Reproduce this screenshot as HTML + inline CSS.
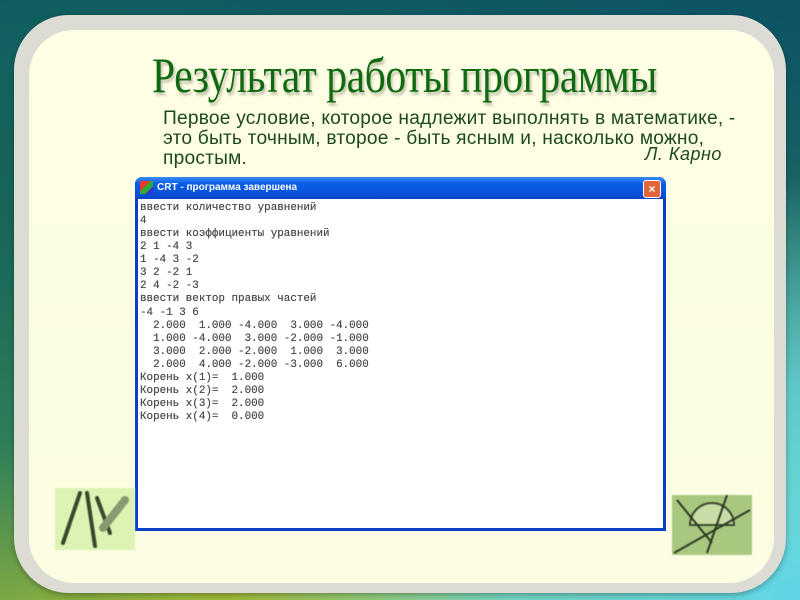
<!DOCTYPE html>
<html><head><meta charset="utf-8"><style>
html,body{margin:0;padding:0}
body{width:800px;height:600px;position:relative;overflow:hidden;
background:linear-gradient(160deg,#0f5a45 0%,#1a6a5a 30%,#2f7f5a 50%,#9cb83a 75%,#d8d430 100%);}
.bgr{position:absolute;inset:0;background:linear-gradient(200deg,rgba(10,80,100,0.9) 0%,rgba(20,100,110,0.6) 40%,rgba(80,200,220,0) 60%);}
.bgr2{position:absolute;inset:0;background:radial-gradient(ellipse at 100% 100%,#5fd6e6 0%,rgba(95,214,230,0.8) 25%,rgba(95,214,230,0) 50%);}
.frame{position:absolute;left:14px;top:15px;width:772px;height:578px;border-radius:55px;background:#dcdcd4;box-shadow:0 2px 6px rgba(0,0,0,.3);}
.panel{position:absolute;left:29px;top:30px;width:745px;height:553px;border-radius:45px;
background:linear-gradient(180deg,#ffffe6 0%,#fbfde0 60%,#fcfde2 100%);}
.title{position:absolute;left:152px;top:50px;font-family:"Liberation Serif",serif;font-size:50px;color:#0f6a10;
transform:scaleX(0.83);transform-origin:left center;white-space:nowrap;line-height:50px;text-shadow:2px 3px 3px rgba(0,0,0,.25);letter-spacing:-0.5px}
.quote{position:absolute;left:163px;top:109px;font-family:"Liberation Sans",sans-serif;font-size:19px;line-height:20px;color:#1c4a1c;white-space:nowrap;letter-spacing:0.2px;transform:scaleX(1.01);transform-origin:left top}
.author{position:absolute;left:645px;top:144px;font-family:"Liberation Sans",sans-serif;font-style:italic;font-size:18px;color:#1c4a1c;letter-spacing:0.5px}
.win{position:absolute;left:135px;top:177px;width:531px;height:354px;background:#0a3fc8;border-radius:7px 7px 0 0}
.tb{position:absolute;left:0;top:0;right:0;height:22px;border-radius:7px 7px 0 0;background:linear-gradient(180deg,#3b8cf5 0%,#0a5ee6 30%,#0650d8 80%,#0a44c0 100%)}
.tt{position:absolute;left:22px;top:5px;font-family:"Liberation Sans",sans-serif;font-size:10px;font-weight:bold;color:#fff}
.ic{position:absolute;left:5px;top:4px;width:13px;height:13px;background:linear-gradient(135deg,#e33 0 40%,#3a3 40% 70%,#33c 70%)}
.x{position:absolute;right:5px;top:3px;width:16px;height:16px;border-radius:3px;background:#e2643a;border:1px solid #fff;color:#fff;font:bold 12px "Liberation Sans",sans-serif;text-align:center;line-height:16px}
.cont{position:absolute;left:3px;top:22px;width:525px;height:329px;background:#fff}
pre{margin:0;position:absolute;left:2px;top:3px;font-family:"Liberation Mono",monospace;font-size:10.9px;line-height:13.07px;color:#4a4a4a;text-shadow:0 0 0.4px #4a4a4a}
.img{position:absolute;filter:blur(0.6px)}
</style></head><body>
<div class="bgr"></div><div class="bgr2"></div>
<div class="frame"></div>
<div class="panel"></div>
<div class="title">Результат работы программы</div>
<div class="quote">Первое условие, которое надлежит выполнять в математике, -<br>это быть точным, второе - быть ясным и, насколько можно,<br>простым.</div>
<div class="author">Л. Карно</div>
<div class="win"><div class="tb"><div class="ic"></div><div class="tt">CRT - программа завершена</div><div class="x">×</div></div>
<div class="cont"><pre>ввести количество уравнений
4
ввести коэффициенты уравнений
2 1 -4 3
1 -4 3 -2
3 2 -2 1
2 4 -2 -3
ввести вектор правых частей
-4 -1 3 6
  2.000  1.000 -4.000  3.000 -4.000
  1.000 -4.000  3.000 -2.000 -1.000
  3.000  2.000 -2.000  1.000  3.000
  2.000  4.000 -2.000 -3.000  6.000
Корень x(1)=  1.000
Корень x(2)=  2.000
Корень x(3)=  2.000
Корень x(4)=  0.000</pre></div></div>
<svg class="img" style="left:55px;top:488px" width="80" height="62">
<rect x="0" y="0" width="80" height="62" fill="#d4f0a8" opacity="0.8"/>
<g stroke="#354a2a" stroke-width="4" stroke-linecap="round"><line x1="25" y1="5" x2="8" y2="55"/><line x1="32" y1="5" x2="40" y2="58"/><line x1="42" y1="10" x2="55" y2="45"/></g>
<line x1="70" y1="12" x2="48" y2="40" stroke="#8a9a70" stroke-width="8" stroke-linecap="round"/>
</svg>
<svg class="img" style="left:672px;top:495px" width="80" height="60">
<rect x="0" y="0" width="80" height="60" fill="#a8c880"/>
<path d="M18 30 A22 22 0 0 1 62 30 Z" fill="#c8dca8" stroke="#3a4a2a" stroke-width="2"/>
<g stroke="#2a3a22" stroke-width="2"><line x1="5" y1="5" x2="40" y2="48"/><line x1="55" y1="0" x2="35" y2="58"/><line x1="78" y1="15" x2="2" y2="58"/></g>
</svg>
</body></html>
